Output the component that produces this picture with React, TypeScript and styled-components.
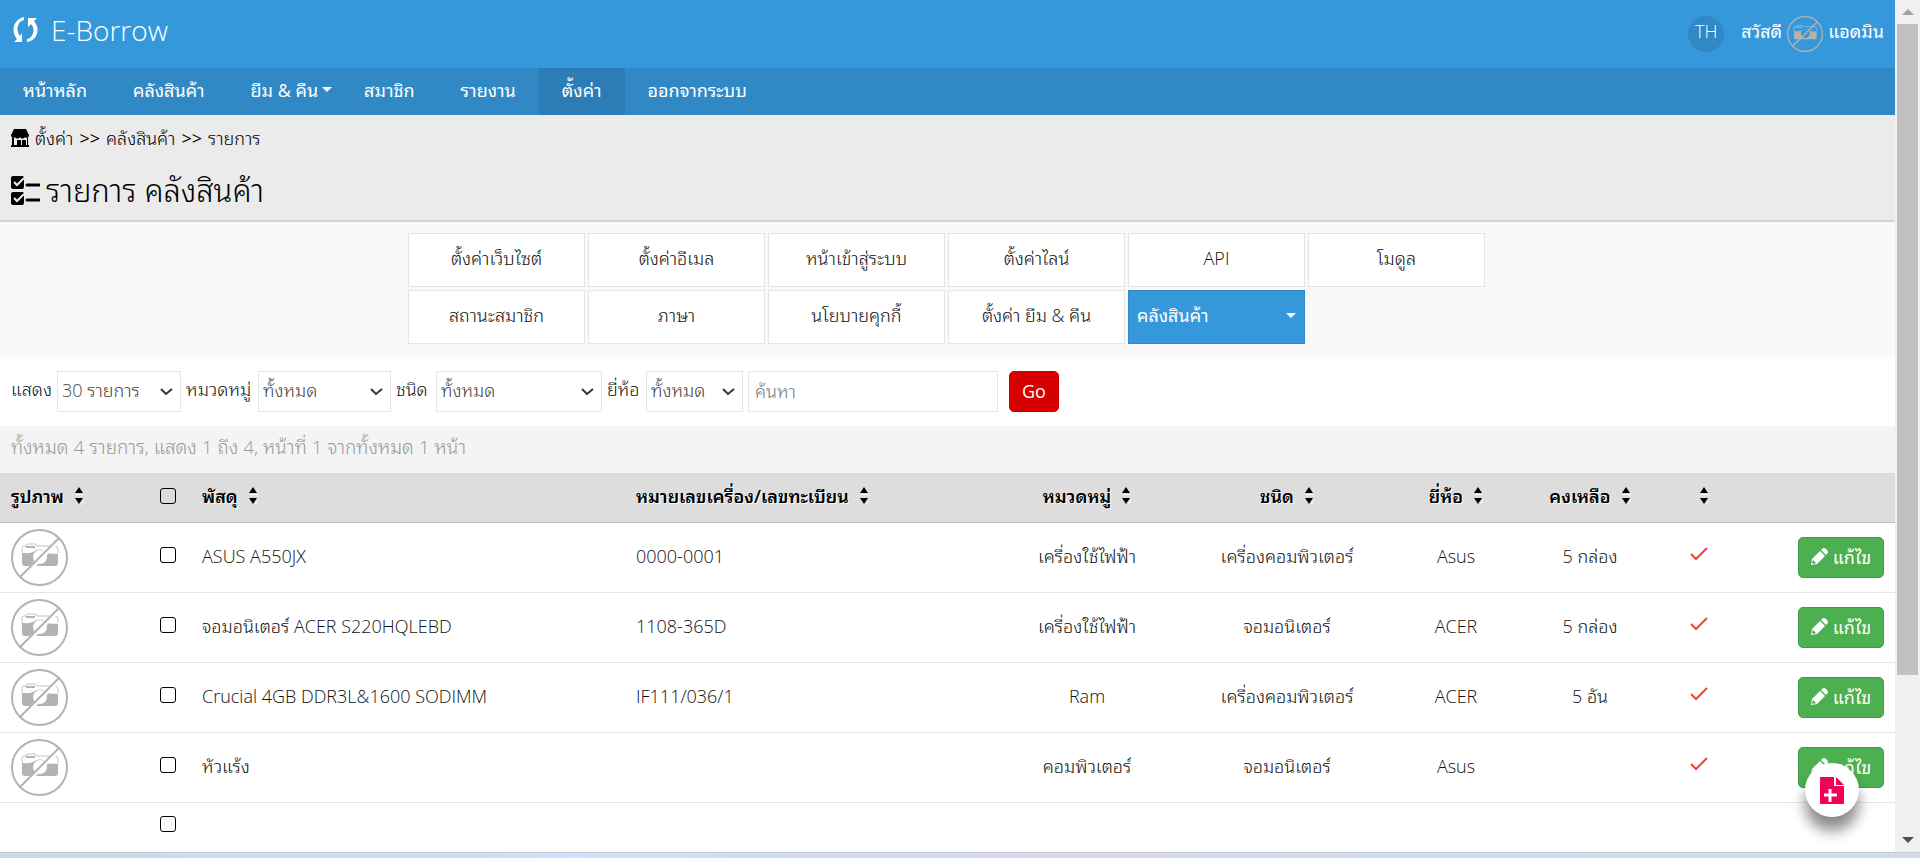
import React from "react";
import styled, { createGlobalStyle, css } from "styled-components";

const GlobalStyle = createGlobalStyle`
  * { box-sizing: border-box; }
  body {
    margin: 0;
    background: #fff;
    color: #111;
    font: 300 18px/28px "Open Sans", "Noto Sans Thai Looped", Loma, Laksaman, Garuda, Waree, Umpush, "Noto Sans Thai", "Noto Sans", sans-serif;
  }
  button, input, select { font: inherit; color: inherit; }
  a { color: inherit; text-decoration: none; }
`;

const Shell = styled.div`
  display: grid;
  grid-template-columns: minmax(0, 1fr) 25px;
`;

const Page = styled.div`
  position: relative;
  min-width: 0;
`;

const Header = styled.header`
  display: flex;
  align-items: center;
  justify-content: space-between;
  height: 68px;
  padding: 0 11px 0 13px;
  background: #3598db;
  color: #fff;
`;

const Brand = styled.a`
  display: flex;
  align-items: center;
  gap: 12px;
  padding-bottom: 8px;
  font-size: 28px;
`;

const UserBar = styled.div`
  display: flex;
  align-items: center;
  gap: 5px;
`;

const UserText = styled.span`
  padding-bottom: 6px;
  font-weight: 400;
`;

const Language = styled.button`
  width: 36px;
  height: 36px;
  margin-right: 12px;
  padding: 0 0 6px;
  border: 0;
  border-radius: 50%;
  background: #3089c5;
`;

const Nav = styled.nav`
  display: flex;
  height: 47px;
  background: #3089c5;
  color: #fff;
  font-weight: 400;
`;

const NavLink = styled.a<{ $active?: boolean; $menu?: boolean }>`
  display: flex;
  align-items: center;
  gap: 4px;
  padding: ${(p) => (p.$menu ? "0 9px 4px 23px" : "0 23px 4px")};
  background: ${(p) => (p.$active ? "#2c7db6" : "transparent")};
`;

const Caret = styled.span`
  border: 5px solid transparent;
  border-top-color: #fff;
  border-bottom: 0;
`;

const Heading = styled.div`
  height: 107px;
  padding: 9px 11px 0;
  background: #ebebeb;
  border-bottom: 2px solid #d3d3d3;
  color: #000;
`;

const Breadcrumb = styled.div`
  display: flex;
  align-items: center;
  gap: 6px;
`;

const Separator = styled.span`
  font-weight: 400;
`;

const Title = styled.h1`
  display: flex;
  align-items: center;
  gap: 6px;
  margin: 20px 0 0;
  font-size: 31px;
  font-weight: 300;
  line-height: 36px;
`;

const Settings = styled.div`
  display: grid;
  grid-template-columns: repeat(6, 177px);
  justify-content: center;
  gap: 3px;
  padding: 11px 2px 13px 0;
  background: #f9f9f9;
`;

const Card = styled.a<{ $active?: boolean }>`
  display: flex;
  align-items: center;
  justify-content: center;
  height: 54px;
  padding: 0 8px 4px;
  border: 1px solid #e5e5e5;
  background: #fff;
  ${(p) =>
    p.$active &&
    css`
      justify-content: space-between;
      border-color: #3089c5;
      background: #3598db;
      color: #fff;
      font-weight: 400;
    `}
`;

const Filters = styled.form`
  display: flex;
  align-items: center;
  height: 69px;
  padding-left: 11px;
`;

const Label = styled.label<{ $width: number }>`
  width: ${(p) => p.$width}px;
  padding-bottom: 6px;
  white-space: nowrap;
`;

const SelectWrap = styled.div<{ $width: number }>`
  display: grid;
  align-items: center;
  width: ${(p) => p.$width}px;
  margin-right: 5px;
  > * { grid-area: 1 / 1; }
  svg { justify-self: end; margin-right: 8px; pointer-events: none; }
`;

const Select = styled.select`
  width: 100%;
  height: 41px;
  padding: 0 4px 4px;
  border: 1px solid #e5e5e5;
  border-radius: 0;
  background: #fff;
  color: #444;
  appearance: none;
`;

const Search = styled.input`
  width: 250px;
  height: 41px;
  margin-right: 11px;
  padding: 0 6px 2px;
  border: 1px solid #e5e5e5;
  background: #fff;
  &::placeholder { color: #777; opacity: 1; }
`;

const Button = styled.button<{ $tone: "go" | "edit" }>`
  display: inline-flex;
  align-items: center;
  justify-content: center;
  gap: 5px;
  width: ${(p) => (p.$tone === "go" ? 50 : 86)}px;
  height: 41px;
  padding: 0 0 2px;
  border: 1px solid ${(p) => (p.$tone === "go" ? "#c80000" : "#429a46")};
  border-radius: 5px;
  background: ${(p) => (p.$tone === "go" ? "#d60000" : "#4caf50")};
  color: #fff;
  font-weight: 400;
  vertical-align: middle;
`;

const Summary = styled.div`
  height: 47px;
  padding: 7px 11px;
  background: #f4f4f4;
  color: #999;
  font-size: 19px;
`;

const Table = styled.table`
  width: 100%;
  border-collapse: separate;
  border-spacing: 0;
  table-layout: fixed;
`;

const Cell = styled.td<{ $align?: string; $lift?: number }>`
  height: 70px;
  padding: 0 11px ${(p) => p.$lift ?? 4}px;
  border-bottom: 1px solid #e5e5e5;
  text-align: ${(p) => p.$align || "left"};
  white-space: nowrap;
  > svg { display: block; margin: 0 auto; }
`;

const ImageCell = styled(Cell)`
  > svg { margin: 0; }
`;

const HeadCell = styled.th<{ $align?: string }>`
  height: 50px;
  padding: 0 11px 4px;
  border-bottom: 1px solid #c3c3c3;
  background: #ddd;
  color: #000;
  font-weight: 600;
  text-align: ${(p) => p.$align || "left"};
  text-shadow: 1px 1px 0 #fff;
  white-space: nowrap;
`;

const LastCell = styled(Cell)`
  height: 49px;
  border-bottom: 0;
`;

const Check = styled.input`
  display: block;
  width: 16px;
  height: 16px;
  margin: 0;
  border: 1px solid #000;
  border-radius: 3px;
  appearance: none;
`;

const SortMark = styled.svg`
  margin: 0 0 3px 10px;
  vertical-align: middle;
`;

const AddButton = styled.button`
  position: absolute;
  right: 36px;
  bottom: 35px;
  display: flex;
  align-items: center;
  justify-content: center;
  width: 54px;
  height: 54px;
  padding: 0;
  border: 0;
  border-radius: 50%;
  background: #fff;
  box-shadow: 0 14px 14px rgba(0, 0, 0, 0.45);
`;

const ScrollRail = styled.div`
  display: flex;
  flex-direction: column;
  align-items: center;
  padding: 9px 0;
  background: #f0f0f0;
`;

const Thumb = styled.div`
  flex: 651 1 0;
  width: 21px;
  margin-top: 9px;
  background: #c1c1c1;
`;

const ThumbRest = styled.div`
  flex: 162 1 0;
`;

const Taskbar = styled.footer`
  height: 6px;
  border-top: 1px solid #c3cbdc;
  background: linear-gradient(90deg, #cfd8e6, #d5defa 30%, #d8d8ec 55%, #d3dcef 80%, #d3dae6);
`;

const Camera = ({ size, thin }: { size: number; thin?: boolean }) => (
  <svg width={size} height={size} viewBox="0 0 57 57" fill="none" aria-hidden="true">
    <path d="M11 24v-5q0-2 2-2h2v-1q0-1 2-1h7q1 0 1 1l1 1h18q3 0 3 3v4" stroke="#c4c4c4" />
    <path d="M15 18h9" stroke="#b3b3b3" strokeWidth="2" />
    <path d="M11 24c5 0 8 1 13-2 3-2 7-2 9 0 4 4 8 2 14 3v9q0 3-3 3H14q-3 0-3-3z" fill="#b3b3b3" />
    <circle cx="29" cy="28" r="7" fill={thin ? "#3598db" : "#fff"} />
    {!thin && <path d="M11 48 48 11" stroke="#fff" strokeWidth="4" />}
    <path d="M9 48 48 9" stroke="#b3b3b3" strokeWidth="2" />
    <circle cx="28.5" cy="28.5" r="27.5" stroke="#b3b3b3" strokeWidth="2" />
  </svg>
);

const SyncIcon = () => (
  <svg width="26" height="26" viewBox="0 0 26 26" aria-hidden="true">
    <path d="M11 0v3C5 4 2 13 7 19l2-3v9H1l3-3C-3 14 1 2 11 0z" fill="#fff" />
    <path d="M14 25v-3c6-1 9-10 4-15l-3 3V1h9l-3 3c7 8 3 20-7 21z" fill="#fff" />
  </svg>
);

const StoreIcon = () => (
  <svg width="18" height="18" viewBox="0 0 18 18" aria-hidden="true">
    <path d="M3 0h12l3 6c0 3-3 4-4 2-1 2-4 2-5 0-1 2-4 2-5 0-1 2-4 1-4-2z" />
    <path d="M1 9h2v7h3v-5h4v5h1v-5h4v5h1V9h1v9H1z" />
    <path d="M0 16h18v2H0z" />
  </svg>
);

const TasksIcon = () => (
  <svg width="29" height="29" viewBox="0 0 29 29" fill="none" aria-hidden="true">
    <rect width="13" height="13" rx="2" fill="#000" />
    <rect y="16" width="13" height="13" rx="2" fill="#000" />
    <path d="m3 6 3 3 7-7M3 22l3 3 7-7" stroke="#ebebeb" strokeWidth="2" />
    <path d="M16 9h12M16 24h12" stroke="#000" strokeWidth="3" strokeLinecap="round" />
  </svg>
);

const PencilIcon = () => (
  <svg width="17" height="17" viewBox="0 0 17 17" fill="#fff" aria-hidden="true">
    <path d="M1 11 9 3l5 5-8 8-6 1z" />
    <path d="m10 2 1-1q2-2 4 0l1 1q2 2 0 4l-1 1z" />
    <path d="m2 12 3 3-3 1-1-1z" fill="#4caf50" />
  </svg>
);

const TickIcon = () => (
  <svg width="18" height="14" viewBox="0 0 18 14" fill="none" aria-label="yes">
    <path d="m1 7 5 5L17 1" stroke="#f44336" strokeWidth="2" />
  </svg>
);

const Chevron = () => (
  <svg width="13" height="8" viewBox="0 0 13 8" fill="none" aria-hidden="true">
    <path d="m1 1 5 5 6-5" stroke="#333" strokeWidth="2" />
  </svg>
);

const AddIcon = () => (
  <svg width="24" height="27" viewBox="0 0 24 27" aria-hidden="true">
    <path d="M1 0h13v9h10v17q0 1-1 1H1q-1 0-1-1V1q0-1 1-1z" fill="#f50057" />
    <path d="m16 0 8 8h-8z" fill="#f50057" />
    <path d="M10 12v13M4 18h13" stroke="#fff" strokeWidth="3" />
  </svg>
);

const Sort = () => (
  <SortMark width="10" height="18" viewBox="0 0 10 18" aria-hidden="true">
    <path d="M2 7h8v1H2zM6 18l4-5v1l-3 4z" fill="#fff" />
    <path d="m1 6 4-6 4 6zM1 11l4 6 4-6z" fill="#000" />
  </SortMark>
);

const Arrow = ({ down }: { down?: boolean }) => (
  <svg width="12" height="6" viewBox="0 0 12 6" aria-hidden="true">
    <path d={down ? "M0 0h12L6 6z" : "M0 6h12L6 0z"} fill={down ? "#505050" : "#a3a3a3"} />
  </svg>
);

const nav: { text: string; menu?: boolean; active?: boolean }[] = [
  { text: "หน้าหลัก" },
  { text: "คลังสินค้า" },
  { text: "ยืม & คืน", menu: true },
  { text: "สมาชิก" },
  { text: "รายงาน" },
  { text: "ตั้งค่า", active: true },
  { text: "ออกจากระบบ" },
];

const settings = [
  "ตั้งค่าเว็บไซต์", "ตั้งค่าอีเมล", "หน้าเข้าสู่ระบบ", "ตั้งค่าไลน์", "API", "โมดูล",
  "สถานะสมาชิก", "ภาษา", "นโยบายคุกกี้", "ตั้งค่า ยืม & คืน",
];

const filters = [
  { id: "count", label: "แสดง", value: "30 รายการ", labelWidth: 46, width: 124 },
  { id: "category", label: "หมวดหมู่", value: "ทั้งหมด", labelWidth: 72, width: 133 },
  { id: "type", label: "ชนิด", value: "ทั้งหมด", labelWidth: 40, width: 166 },
  { id: "brand", label: "ยี่ห้อ", value: "ทั้งหมด", labelWidth: 39, width: 97 },
];

const columns = [149, 42, 434, 369, 186, 214, 124, 144, 74, 159];

const centered = ["หมวดหมู่", "ชนิด", "ยี่ห้อ", "คงเหลือ", ""];

const rows = [
  ["ASUS A550JX", "0000-0001", "เครื่องใช้ไฟฟ้า", "เครื่องคอมพิวเตอร์", "Asus", "5 กล่อง"],
  ["จอมอนิเตอร์ ACER S220HQLEBD", "1108-365D", "เครื่องใช้ไฟฟ้า", "จอมอนิเตอร์", "ACER", "5 กล่อง"],
  ["Crucial 4GB DDR3L&1600 SODIMM", "IF111/036/1", "Ram", "เครื่องคอมพิวเตอร์", "ACER", "5 อัน"],
  ["หัวแร้ง", "", "คอมพิวเตอร์", "จอมอนิเตอร์", "Asus", ""],
];

export default function App() {
  return (
    <>
      <GlobalStyle />
      <Shell>
        <Page>
          <Header>
            <Brand href="#"><SyncIcon />E-Borrow</Brand>
            <UserBar>
              <Language type="button">TH</Language>
              <UserText>สวัสดี</UserText>
              <Camera size={36} thin />
              <UserText as="a" href="#">แอดมิน</UserText>
            </UserBar>
          </Header>
          <Nav>
            {nav.map((n) => (
              <NavLink key={n.text} href="#" $active={n.active} $menu={n.menu}>
                {n.text}
                {n.menu && <Caret />}
              </NavLink>
            ))}
          </Nav>
          <Heading>
            <Breadcrumb>
              <StoreIcon />
              <a href="#">ตั้งค่า</a>
              <Separator>&gt;&gt;</Separator>
              <a href="#">คลังสินค้า</a>
              <Separator>&gt;&gt;</Separator>
              <span>รายการ</span>
            </Breadcrumb>
            <Title><TasksIcon />รายการ คลังสินค้า</Title>
          </Heading>
          <Settings>
            {settings.map((s) => <Card key={s} href="#">{s}</Card>)}
            <Card href="#" $active>คลังสินค้า<Caret /></Card>
          </Settings>
          <Filters onSubmit={(e) => e.preventDefault()}>
            {filters.map((f) => (
              <React.Fragment key={f.id}>
                <Label htmlFor={f.id} $width={f.labelWidth}>{f.label}</Label>
                <SelectWrap $width={f.width}>
                  <Select id={f.id}><option>{f.value}</option></Select>
                  <Chevron />
                </SelectWrap>
              </React.Fragment>
            ))}
            <Search type="text" placeholder="ค้นหา" aria-label="ค้นหา" />
            <Button $tone="go" type="submit">Go</Button>
          </Filters>
          <Summary>ทั้งหมด 4 รายการ, แสดง 1 ถึง 4, หน้าที่ 1 จากทั้งหมด 1 หน้า</Summary>
          <Table>
            <colgroup>
              {columns.map((w, i) => <col key={i} width={w} />)}
            </colgroup>
            <thead>
              <tr>
                <HeadCell>รูปภาพ<Sort /></HeadCell>
                <HeadCell><Check type="checkbox" aria-label="เลือกทั้งหมด" /></HeadCell>
                <HeadCell>พัสดุ<Sort /></HeadCell>
                <HeadCell>หมายเลขเครื่อง/เลขทะเบียน<Sort /></HeadCell>
                {centered.map((h) => <HeadCell key={h} $align="center">{h}<Sort /></HeadCell>)}
                <HeadCell />
              </tr>
            </thead>
            <tbody>
              {rows.map(([name, serial, ...rest]) => (
                <tr key={name}>
                  <ImageCell $lift={0}><Camera size={57} /></ImageCell>
                  <Cell $lift={6}><Check type="checkbox" aria-label={name} /></Cell>
                  <Cell>{name}</Cell>
                  <Cell>{serial}</Cell>
                  {rest.map((t, i) => <Cell key={i} $align="center">{t}</Cell>)}
                  <Cell $lift={8}><TickIcon /></Cell>
                  <Cell $align="right" $lift={0}>
                    <Button $tone="edit" type="button"><PencilIcon />แก้ไข</Button>
                  </Cell>
                </tr>
              ))}
              <tr>
                <LastCell />
                <LastCell $lift={8}><Check type="checkbox" aria-label="เลือกทั้งหมด" /></LastCell>
                <LastCell colSpan={8} />
              </tr>
            </tbody>
          </Table>
          <AddButton type="button" aria-label="เพิ่ม"><AddIcon /></AddButton>
        </Page>
        <ScrollRail aria-hidden="true">
          <Arrow />
          <Thumb />
          <ThumbRest />
          <Arrow down />
        </ScrollRail>
      </Shell>
      <Taskbar />
    </>
  );
}
